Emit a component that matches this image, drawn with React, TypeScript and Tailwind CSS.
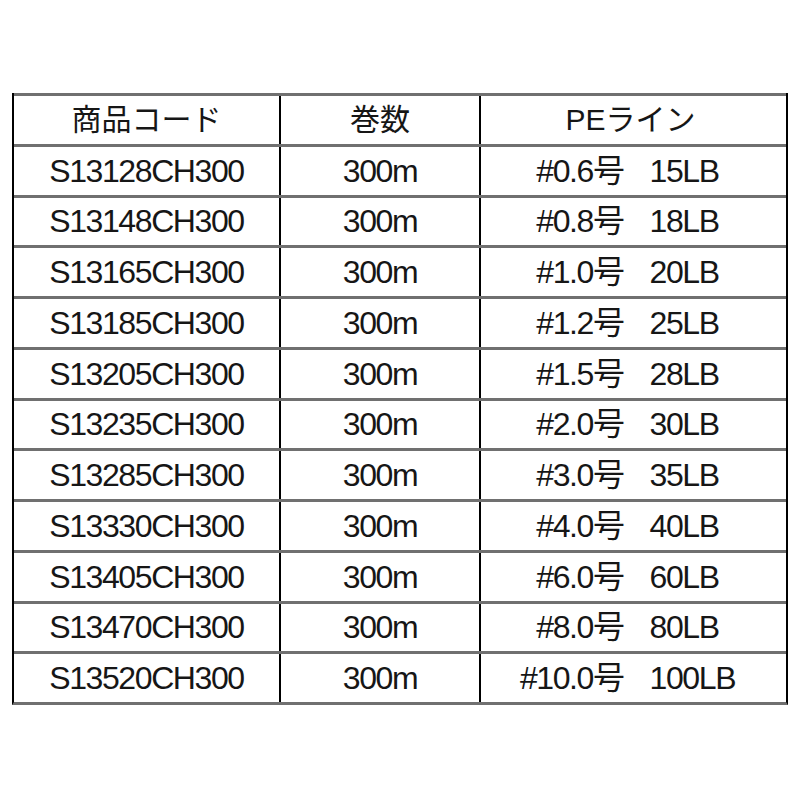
import React from "react";

const rows: [string, string, string, string][] = [
  ["S13128CH300", "300m", "#0.6号", "15LB"],
  ["S13148CH300", "300m", "#0.8号", "18LB"],
  ["S13165CH300", "300m", "#1.0号", "20LB"],
  ["S13185CH300", "300m", "#1.2号", "25LB"],
  ["S13205CH300", "300m", "#1.5号", "28LB"],
  ["S13235CH300", "300m", "#2.0号", "30LB"],
  ["S13285CH300", "300m", "#3.0号", "35LB"],
  ["S13330CH300", "300m", "#4.0号", "40LB"],
  ["S13405CH300", "300m", "#6.0号", "60LB"],
  ["S13470CH300", "300m", "#8.0号", "80LB"],
  ["S13520CH300", "300m", "#10.0号", "100LB"],
];

const font = {
  fontFamily: '"Liberation Sans", "Noto Sans CJK JP", sans-serif',
};

export default function App() {
  return (
    <div className="w-[800px] h-[800px] bg-white pt-[93px] text-[#161616]" style={font}>
      <div className="ml-[12px] w-[776px] border-x-2 border-black border-b-[3px] border-b-[#707070]">
        <div className="grid grid-cols-[267px_200px_305px] h-[50.75px] border-t-[3px] border-[#707070] text-[30px] leading-none">
          <div className="border-r-2 border-black flex items-center justify-center">商品コード</div>
          <div className="border-r-2 border-black flex items-center justify-center">巻数</div>
          <div className="flex items-center justify-center pr-[6px]">PEライン</div>
        </div>
        {rows.map((r) => (
          <div
            key={r[0]}
            className="grid grid-cols-[267px_200px_305px] h-[50.75px] border-t-[3px] border-[#707070] text-[32px] leading-none tracking-[-1.4px]"
          >
            <div className="border-r-2 border-black flex items-center justify-center">{r[0]}</div>
            <div className="border-r-2 border-black flex items-center justify-center">{r[1]}</div>
            <div className="flex items-center justify-center pr-[12px] gap-[26px]">
              <span>{r[2]}</span>
              <span>{r[3]}</span>
            </div>
          </div>
        ))}
      </div>
    </div>
  );
}
